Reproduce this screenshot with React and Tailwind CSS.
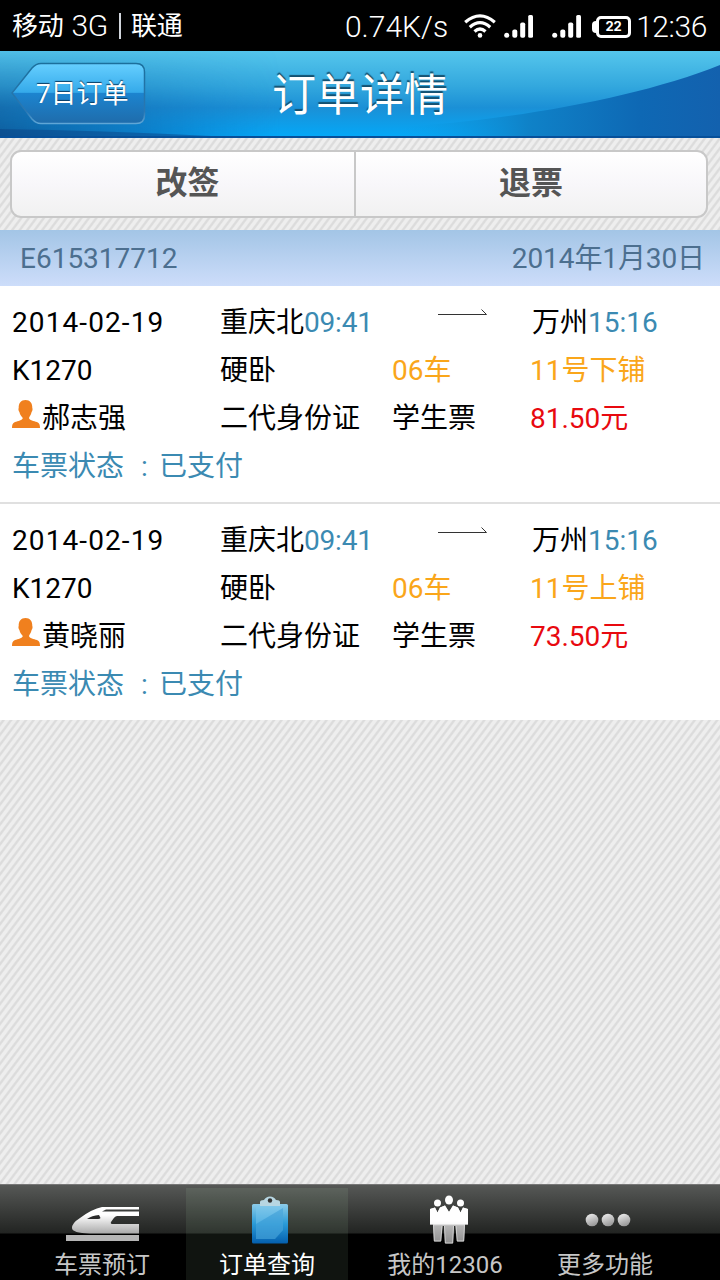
import React, { useState } from 'react';

const tickets = [
    { id: 1, date: '2014-02-19', from: '重庆北', depart: '09:41', to: '万州', arrive: '15:16', train: 'K1270', seat: '硬卧', coach: '06车', berth: '11号下铺', name: '郝志强', idType: '二代身份证', ticketType: '学生票', price: '81.50元', status: '已支付' },
    { id: 2, date: '2014-02-19', from: '重庆北', depart: '09:41', to: '万州', arrive: '15:16', train: 'K1270', seat: '硬卧', coach: '06车', berth: '11号上铺', name: '黄晓丽', idType: '二代身份证', ticketType: '学生票', price: '73.50元', status: '已支付' },
];

const Signal = () => (
    <svg className="h-6 w-[30px]" viewBox="0 0 30 24" fill="#fff">
        <circle cx="2.7" cy="21.2" r="2.5" />
        <rect x="8.3" y="15.5" width="5" height="8.2" rx="2" />
        <rect x="16.2" y="8.5" width="5" height="15.2" rx="1.8" />
        <rect x="24.2" y="1" width="4.8" height="22.7" rx="1.5" />
    </svg>
);

const StatusBar = () => (
    <div className="flex h-[51px] items-center bg-black pl-3 text-white">
        <div className="flex items-center text-[26px] leading-[50px] tracking-[-0.3px]">
            <span>移动</span>
            <span className="ml-2 text-[30px] font-light">3G</span>
            <span className="mr-[10px] ml-[11px] h-[26px] w-[2px] bg-gray-300" />
            <span>联通</span>
        </div>
        <span className="ml-auto pt-0.5 text-[30px] leading-[50px] font-light">0.74K/s</span>
        <svg className="ml-[16px] h-6 w-8" viewBox="0 0 32 24" fill="none" stroke="#fff" strokeWidth="3.2">
            <path d="M1.2 8.2 Q16 -4.5 30.8 8.2" />
            <path d="M5.8 13.2 Q16 4 26.2 13.2" />
            <path d="M10.5 17.5 Q16 12.5 21.5 17.5" />
            <circle cx="16" cy="21.4" r="2.3" fill="#fff" stroke="none" />
        </svg>
        <div className="ml-[8px] flex gap-[18px]">
            <Signal />
            <Signal />
        </div>
        <div className="ml-[10px] flex items-center pt-[2px]">
            <div className="h-3 w-1 rounded-l bg-white" />
            <div className="flex h-[22px] w-[35px] items-center justify-center rounded-[5px] border-[3px] border-white font-[Inter] text-[13px] leading-none font-bold">22</div>
        </div>
        <span className="mr-[13px] ml-[5px] pt-0.5 text-[30px] leading-[50px] font-light tracking-[-0.4px]">12:36</span>
    </div>
);

const Header = () => (
    <div className="relative flex h-[87px] items-start justify-center overflow-hidden border-b-2 border-[#07509a]">
        <svg className="absolute inset-0 h-[87px] w-full" viewBox="0 0 720 87" preserveAspectRatio="none">
            <defs>
                <linearGradient id="sky" x1="0" y1="0" x2="0" y2="1">
                    <stop offset="0" stopColor="#55c6ec" />
                    <stop offset="0.4" stopColor="#33a8de" />
                    <stop offset="0.65" stopColor="#1b90d6" />
                    <stop offset="1" stopColor="#03a9f9" />
                </linearGradient>
                <linearGradient id="left" x1="0" y1="0" x2="1" y2="0">
                    <stop offset="0" stopColor="#10528f" stopOpacity="0.9" />
                    <stop offset="0.5" stopColor="#0f5fa6" stopOpacity="0.6" />
                    <stop offset="1" stopColor="#0b6fc0" stopOpacity="0" />
                </linearGradient>
                <linearGradient id="fade" x1="0" y1="0" x2="0" y2="1">
                    <stop offset="0" stopColor="#111" />
                    <stop offset="0.4" stopColor="#555" />
                    <stop offset="1" stopColor="#fff" />
                </linearGradient>
                <mask id="low">
                    <rect width="720" height="87" fill="url(#fade)" />
                </mask>
                <linearGradient id="swoosh" x1="0" y1="0" x2="1" y2="0">
                    <stop offset="0" stopColor="#0c9fe8" stopOpacity="0" />
                    <stop offset="0.4" stopColor="#0f82c8" />
                    <stop offset="0.75" stopColor="#0e68b4" />
                    <stop offset="1" stopColor="#1361ae" />
                </linearGradient>
            </defs>
            <rect width="720" height="87" fill="url(#sky)" />
            <rect width="280" height="87" fill="url(#left)" mask="url(#low)" />
            <path d="M450 72 C550 62 650 42 720 14 V87 H400 V76 Z" fill="url(#swoosh)" />
            <path d="M0 78 Q120 80 250 87 H0 Z" fill="#0b3f80" opacity="0.45" />
        </svg>
        <button className="absolute top-[11px] left-[10px] flex h-[63px] w-[136px] items-center">
            <svg className="absolute inset-0 h-full w-full" viewBox="0 0 136 63">
                <defs>
                    <linearGradient id="back" x1="0" y1="0" x2="0" y2="1">
                        <stop offset="0" stopColor="#66cfff" />
                        <stop offset="0.48" stopColor="#35aaea" />
                        <stop offset="0.5" stopColor="#1c84cf" />
                        <stop offset="1" stopColor="#1f6cab" />
                    </linearGradient>
                    <linearGradient id="backEdge" x1="0" y1="0" x2="0" y2="1">
                        <stop offset="0" stopColor="#1b6f9c" />
                        <stop offset="0.8" stopColor="#2a78b4" />
                        <stop offset="1" stopColor="#5fa6d6" />
                    </linearGradient>
                </defs>
                <path d="M2 31 L22 6 Q26 1.500 31 1.500 H126 Q134.500 1.500 134.500 10 V53 Q134.500 61.500 126 61.500 H31 Q26 61.500 22 57 Z" fill="url(#back)" stroke="url(#backEdge)" strokeWidth="1.5" />
            </svg>
            <span className="relative pt-px pl-[26px] text-[26px] leading-none text-white [text-shadow:0_-1px_1px_#0a3c63]">7日订单</span>
        </button>
        <h1 className="relative text-[44px] leading-[90px] text-white [text-shadow:0_-2px_1px_#14506f]">订单详情</h1>
    </div>
);

const Avatar = () => (
    <svg className="mr-[2px] h-[28px] w-[28px] shrink-0" viewBox="0 0 28 28">
        <path d="M13.500 0 C18 0 20.500 3 20.300 8 C20.800 8.500 20.600 11 19.600 12 C19 15 17.500 16.500 17 18 C17.300 20.500 22 21 25 22 C27.500 23 28 25 28 28 H0 C0 25 0.500 23 3 22 C6 21 10.500 20.500 10.800 18 C9.500 16.500 8 15 7.400 12 C6.400 11 6.200 8.500 6.700 8 C6.500 3 9 0 13.500 0 Z" fill="#f0801e" />
    </svg>
);

const Ticket = ({ ticket }) => (
    <div className="grid grid-cols-[208px_172px_138px_1fr] pt-[13px] pb-[11px] pl-[12px] text-[28px] leading-[48px] text-black">
        <span className="tracking-[1.1px]">{ticket.date}</span>
        <span>{ticket.from}<span className="tracking-[-0.2px] text-[#3b8ab2]">{ticket.depart}</span></span>
        <svg className="mt-[10px] ml-[46px] h-[8px] w-[50px]" viewBox="0 0 50 8" fill="none" stroke="#333" strokeWidth="1">
            <path d="M0 5.500 H48.500 L43.500 0.500" />
        </svg>
        <span className="pl-[2px]">{ticket.to}<span className="text-[#3b8ab2]">{ticket.arrive}</span></span>

        <span>{ticket.train}</span>
        <span>{ticket.seat}</span>
        <span className="text-[#faa61a]">{ticket.coach}</span>
        <span className="text-[#faa61a]">{ticket.berth}</span>

        <span className="flex">
            <span className="pt-[5px]"><Avatar /></span>
            {ticket.name}
        </span>
        <span>{ticket.idType}</span>
        <span>{ticket.ticketType}</span>
        <span className="text-[#e8090f]">{ticket.price}</span>

        <span className="col-span-4 flex text-[#3b8ab2]">
            <span className="w-[118px]">车票状态</span>
            <span className="w-[29px] text-center">:</span>
            {ticket.status}
        </span>
    </div>
);

const TrainIcon = () => (
    <svg className="h-[36px] w-[74px]" viewBox="0 0 74 36">
        <defs>
            <linearGradient id="metal" x1="0" y1="0" x2="0" y2="1">
                <stop offset="0.3" stopColor="#fff" />
                <stop offset="1" stopColor="#a9a9a9" />
            </linearGradient>
        </defs>
        <path d="M36 1 H73 V3.500 H40 L36 5.500 H73 V10 H51 Q49 10 47.500 12.500 L45 16 Q44 18 47 18 H73 V27.500 H24 Q6 27 6 22 Q6 17 14 12 Q26 3 36 1 Z" fill="url(#metal)" />
        <path d="M21 13 Q26 9.500 33 9 L34.500 12 Q34 13 32 13 Z" fill="#2a2b2a" />
        <rect y="29" width="73" height="6" fill="#b5b5b5" />
    </svg>
);

const ClipboardIcon = () => (
    <svg className="h-[48px] w-[38px]" viewBox="0 0 38 48">
        <defs>
            <linearGradient id="board" x1="0" y1="0" x2="0" y2="1">
                <stop offset="0" stopColor="#8ccbe8" />
                <stop offset="0.5" stopColor="#2a9bd8" />
                <stop offset="1" stopColor="#045fae" />
            </linearGradient>
        </defs>
        <rect x="1" y="8" width="36" height="39.500" rx="1.500" fill="url(#board)" />
        <path d="M5 10 H32 V34 L24 43 H5 Z" fill="#7cc8ee" opacity="0.5" />
        <path d="M5 28 L32 12 V34 L24 43 H5 Z" fill="#0d7dc8" opacity="0.3" />
        <path d="M9 10 V6 Q9 4 13 4 Q15 0.500 19 0.500 Q23 0.500 25 4 Q29 4 29 6 V10 Z" fill="#b7d6e2" />
        <circle cx="19" cy="4.500" r="2.200" fill="#333" />
    </svg>
);

const PeopleIcon = () => (
    <svg className="h-[49px] w-[40px]" viewBox="0 0 40 49">
        <defs>
            <linearGradient id="crowd" x1="0" y1="0" x2="0" y2="1">
                <stop offset="0.4" stopColor="#fff" />
                <stop offset="0.55" stopColor="#b4b4b4" />
                <stop offset="1" stopColor="#8f8f8f" />
            </linearGradient>
        </defs>
        <path d="M1 14 L6 12.500 L8.500 17.500 L11 12.500 L16 10.500 L20 17 L24 10.500 L29 12.500 L31.500 17.500 L34 12.500 L39 14 V29.500 H36 L35 46.500 H28 L26.500 31 H25 L24 48.500 H16 L15 31 H13.500 L12 46.500 H5 L4 29.500 H1 Z" fill="url(#crowd)" />
        <path d="M4.500 30 L5.300 46 H11.800 L13 31 M15.500 31 L16.300 48 H23.700 L24.500 31 M27 31 L28.200 46 H34.700 L35.500 30" fill="none" stroke="#dcdcdc" strokeWidth="0.8" />
        <path d="M1 14 V29.500 H39 V14 L34 12.500 L31.500 17.500 L29 12.500 L24 10.500 L20 17 L16 10.500 L11 12.500 L8.500 17.500 L6 12.500 Z" fill="#fff" opacity="0.85" />
        <circle cx="8.500" cy="8" r="3.500" fill="#fff" />
        <ellipse cx="20" cy="5" rx="4" ry="4.500" fill="#fff" />
        <circle cx="31.500" cy="8" r="3.500" fill="#fff" />
    </svg>
);

const DotsIcon = () => (
    <svg className="h-[14px] w-[46px]" viewBox="0 0 46 14">
        <defs>
            <linearGradient id="dot" x1="0" y1="0" x2="0.4" y2="1">
                <stop offset="0" stopColor="#f4f4f4" />
                <stop offset="1" stopColor="#9b9b9b" />
            </linearGradient>
        </defs>
        <circle cx="7" cy="7" r="6.300" fill="url(#dot)" />
        <circle cx="23" cy="7" r="6.300" fill="url(#dot)" />
        <circle cx="39" cy="7" r="6.300" fill="url(#dot)" />
    </svg>
);

const tabs = [
    { label: '车票预订', icon: <TrainIcon />, box: 'w-[186px] pl-[18px]', iconBox: 'pt-[8px] pl-[2px]' },
    { label: '订单查询', icon: <ClipboardIcon />, box: 'w-[162px]', iconBox: 'pl-[5px]' },
    { label: '我的12306', icon: <PeopleIcon />, box: 'w-[180px] pl-[14px]', iconBox: 'pl-[7px]' },
    { label: '更多功能', icon: <DotsIcon />, box: 'w-[154px]', iconBox: 'pl-[5px]' },
];

const App = () => {
    const [active, setActive] = useState(1);

    return (
        <div className="flex h-[1280px] w-[720px] flex-col overflow-hidden bg-[repeating-linear-gradient(127deg,#eeeeee_0px,#eeeeee_2.400px,#dcdcdc_3.600px,#dcdcdc_4.800px,#eeeeee_6px)] font-['Roboto','Noto_Sans_CJK_SC',sans-serif]">
            <StatusBar />
            <Header />

            {/* Change / refund buttons */}
            <div className="px-[10px] pt-3 pb-[12px]">
                <div className="flex h-[68px] w-[698px] overflow-hidden rounded-[11px] border-2 border-[#c8c8c8] bg-linear-to-b from-white via-[#f8f7fa] to-[#f1f1f1] text-[32px] font-bold text-[#555]">
                    <button className="w-[344px] border-r-2 border-[#c8c8c8] pb-1 pl-[9px] leading-[62px]">改签</button>
                    <button className="flex-1 pb-1 leading-[62px]">退票</button>
                </div>
            </div>

            {/* Order number */}
            <div className="flex h-[56px] shrink-0 items-center justify-between bg-linear-to-b from-[#a3c5e6] to-[#cdddfa] pt-[2px] pr-[15px] pl-[20px] text-[28px] text-[#4c6f8f]">
                <span>E615317712</span>
                <span className="tracking-[-0.1px]">2014年1月30日</span>
            </div>

            <div className="divide-y-2 divide-[#e0e0e0] bg-white">
                {tickets.map(ticket => (
                    <Ticket key={ticket.id} ticket={ticket} />
                ))}
            </div>

            {/* Bottom tabs */}
            <div className="mt-auto flex h-[96px] border-t border-[#777] bg-[linear-gradient(#565856_0px,#222422_48px,#000_49px,#000_100%)]">
                {tabs.map((tab, i) => (
                    <button
                        key={tab.label}
                        onClick={() => setActive(i)}
                        className={`mt-[3px] flex flex-col items-center pt-px ${tab.box} ${i === active ? 'bg-[#c8ffc8]/8 text-white' : 'text-[#c6c6c6]'}`}
                    >
                        <span className={`flex h-[62px] items-center ${tab.iconBox}`}>{tab.icon}</span>
                        <span className="text-[24px] leading-[30px]">{tab.label}</span>
                    </button>
                ))}
            </div>
        </div>
    );
};

export default App;
